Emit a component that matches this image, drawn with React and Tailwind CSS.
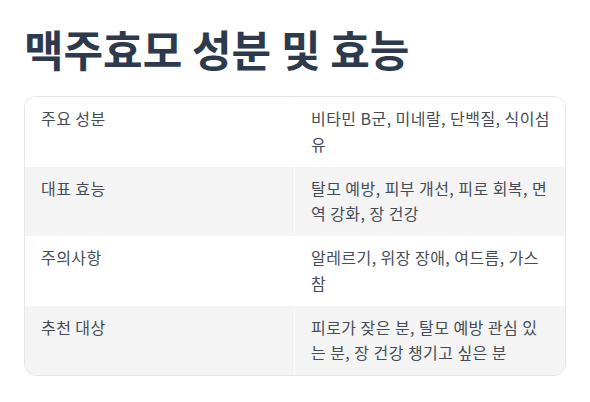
import React from "react";

const rows = [
  { label: "주요 성분", value: "비타민 B군, 미네랄, 단백질, 식이섬유" },
  { label: "대표 효능", value: "탈모 예방, 피부 개선, 피로 회복, 면역 강화, 장 건강" },
  { label: "주의사항", value: "알레르기, 위장 장애, 여드름, 가스참" },
  { label: "추천 대상", value: "피로가 잦은 분, 탈모 예방 관심 있는 분, 장 건강 챙기고 싶은 분" },
];

const App = () => {
  return (
    <div
      className="bg-white px-6 pt-6 pb-6"
      style={{ fontFamily: '"Noto Sans CJK KR", "Noto Sans", sans-serif' }}
    >
      <h1 className="text-[43px] leading-[48px] font-bold text-[#2d3a4e] mb-6">
        맥주효모 성분 및 효능
      </h1>

      <div className="border border-[#e6e6e6] rounded-xl overflow-hidden">
        {rows.map((row, i) => (
          <div
            key={row.label}
            className={`grid grid-cols-2 ${i % 2 === 1 ? "bg-[#f4f4f4]" : "bg-white"}`}
          >
            <div className="px-4 py-[9.25px] text-[16px] leading-[25.5px] tracking-[0.45px] text-[#454c56] border-r border-[#fbfbfb]">
              {row.label}
            </div>
            <div className="pl-4 pr-[13px] py-[9.25px] text-[16px] leading-[25.5px] tracking-[0.45px] text-[#454c56]">
              {row.value}
            </div>
          </div>
        ))}
      </div>
    </div>
  );
};

export default App;
